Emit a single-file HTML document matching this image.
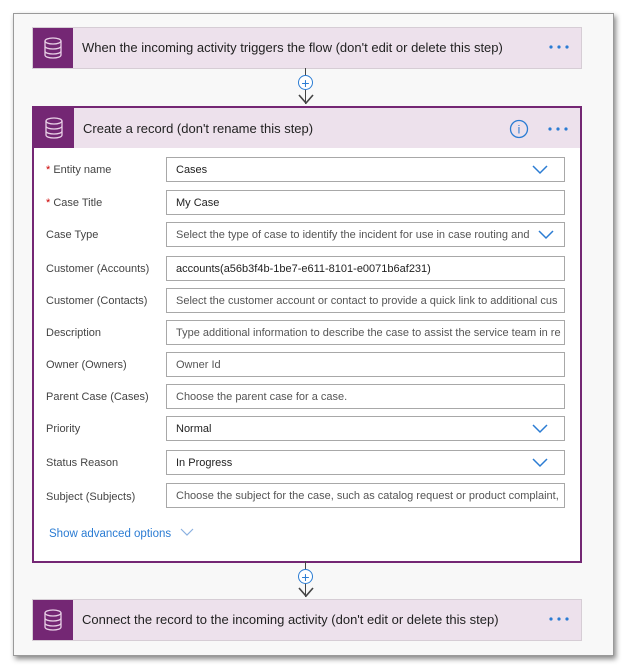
<html><head><style>
body{margin:0;width:628px;height:667px;background:#fff;font-family:"Liberation Sans",sans-serif;position:relative;overflow:hidden}
.frame{position:absolute;left:13px;top:13px;width:599px;height:641px;background:#f8f8f8;border:1px solid #9a9a9a;box-shadow:2px 3px 5px #888}
.card{position:absolute;left:32px;width:548px;height:40px;background:#ede1ec;border:1px solid #d6cdd5}
.ic{position:absolute;left:0;top:0;width:40px;height:40px;background:#742774}
.ic svg{position:absolute;left:10px;top:9px}
.t{position:absolute;left:49px;top:12px;font-size:13px;color:#222}
.dots{position:absolute;right:12px;top:17px}
.main{position:absolute;left:32px;top:106px;width:546px;height:453px;border:2px solid #742774;background:#fff}
.mh{position:absolute;left:0;top:0;width:546px;height:40px;background:#ede1ec}
.lab{position:absolute;left:12px;font-size:11px;color:#444}
.lab b{color:#c00;font-weight:normal}
.box{position:absolute;left:132px;width:399px;height:25px;border:1px solid #a8a8a8;font-size:11px;color:#222;line-height:24px;padding-left:9px;box-sizing:border-box;white-space:nowrap;overflow:hidden}
.box.p{color:#555}
.chev{position:absolute;right:16px;top:7px}
.con{position:absolute;left:305px;width:1px;background:#444}
.plus{position:absolute;width:15px;height:15px;border:1px solid #2b7cd3;border-radius:50%;background:#fff;color:#2b7cd3;font-size:14px;line-height:14px;text-align:center;box-sizing:border-box}
</style></head><body>
<div class="frame"></div>
<svg width="0" height="0" style="position:absolute"><defs><g id="db"><ellipse cx="10" cy="4" rx="8" ry="3" fill="none" stroke="#e8cfe6" stroke-width="1.3"/><path d="M2 4v14c0 2 4 3 8 3s8-1 8-3V4M2 9c0 2 4 3 8 3s8-1 8-3M2 14c0 2 4 3 8 3s8-1 8-3" fill="none" stroke="#e8cfe6" stroke-width="1.3"/></g>
<path id="cv" d="M1 1l7 7 7-7" fill="none" stroke="#2b7cd3" stroke-width="1.5"/>
<g id="dt" fill="#2b7cd3"><circle cx="2" cy="2" r="1.6"/><circle cx="10" cy="2" r="1.6"/><circle cx="18" cy="2" r="1.6"/></g></defs></svg>

<div class="card" style="top:27px"><div class="ic"><svg width="20" height="22"><use href="#db"/></svg></div><div class="t">When the incoming activity triggers the flow (don't edit or delete this step)</div><svg class="dots" width="20" height="4"><use href="#dt"/></svg></div>
<div class="con" style="top:68px;height:36px"></div>
<div class="plus" style="left:298px;top:75px">+</div>
<svg style="position:absolute;left:298px;top:93px" width="16" height="12"><path d="M1 2l7 8 7-8" fill="none" stroke="#444" stroke-width="1.6"/></svg>

<div class="main">
<div class="mh"><div class="ic"><svg width="20" height="22"><use href="#db"/></svg></div><div class="t" style="top:13px">Create a record (don't rename this step)</div>
<svg style="position:absolute;left:475px;top:11px" width="20" height="20"><circle cx="10" cy="10" r="8.5" fill="none" stroke="#2b7cd3" stroke-width="1.3"/><text x="10" y="14.5" font-size="12" fill="#2b7cd3" text-anchor="middle" font-family="Liberation Sans">i</text></svg>
<svg class="dots" style="top:19px" width="20" height="4"><use href="#dt"/></svg></div>
<div class="lab" style="top:56px"><b>*</b> Entity name</div><div class="box" style="top:49px">Cases<svg class="chev" width="16" height="10"><use href="#cv"/></svg></div>
<div class="lab" style="top:89px"><b>*</b> Case Title</div><div class="box" style="top:82px">My Case</div>
<div class="lab" style="top:121px">Case Type</div><div class="box p" style="top:114px">Select the type of case to identify the incident for use in case routing and<svg class="chev" width="16" height="10" style="background:#fff;padding-left:6px;right:10px"><use href="#cv"/></svg></div>
<div class="lab" style="top:155px">Customer (Accounts)</div><div class="box" style="top:148px">accounts(a56b3f4b-1be7-e611-8101-e0071b6af231)</div>
<div class="lab" style="top:187px">Customer (Contacts)</div><div class="box p" style="top:180px">Select the customer account or contact to provide a quick link to additional cus</div>
<div class="lab" style="top:219px">Description</div><div class="box p" style="top:212px">Type additional information to describe the case to assist the service team in re</div>
<div class="lab" style="top:251px">Owner (Owners)</div><div class="box p" style="top:244px">Owner Id</div>
<div class="lab" style="top:283px">Parent Case (Cases)</div><div class="box p" style="top:276px">Choose the parent case for a case.</div>
<div class="lab" style="top:315px">Priority</div><div class="box" style="top:308px">Normal<svg class="chev" width="16" height="10"><use href="#cv"/></svg></div>
<div class="lab" style="top:349px">Status Reason</div><div class="box" style="top:342px">In Progress<svg class="chev" width="16" height="10"><use href="#cv"/></svg></div>
<div class="lab" style="top:383px">Subject (Subjects)</div><div class="box p" style="top:375px">Choose the subject for the case, such as catalog request or product complaint,</div>
<div style="position:absolute;left:15px;top:420px;font-size:11.5px;color:#2b7cd3">Show advanced options <svg width="14" height="9" style="margin-left:6px"><path d="M1 1l6 6 6-6" fill="none" stroke="#8ab0e0" stroke-width="1.2"/></svg></div>
</div>

<div class="con" style="top:561px;height:36px"></div>
<div class="plus" style="left:298px;top:569px">+</div>
<svg style="position:absolute;left:298px;top:586px" width="16" height="12"><path d="M1 2l7 8 7-8" fill="none" stroke="#444" stroke-width="1.6"/></svg>
<div class="card" style="top:599px"><div class="ic"><svg width="20" height="22"><use href="#db"/></svg></div><div class="t">Connect the record to the incoming activity (don't edit or delete this step)</div><svg class="dots" width="20" height="4"><use href="#dt"/></svg></div>
</body></html>
